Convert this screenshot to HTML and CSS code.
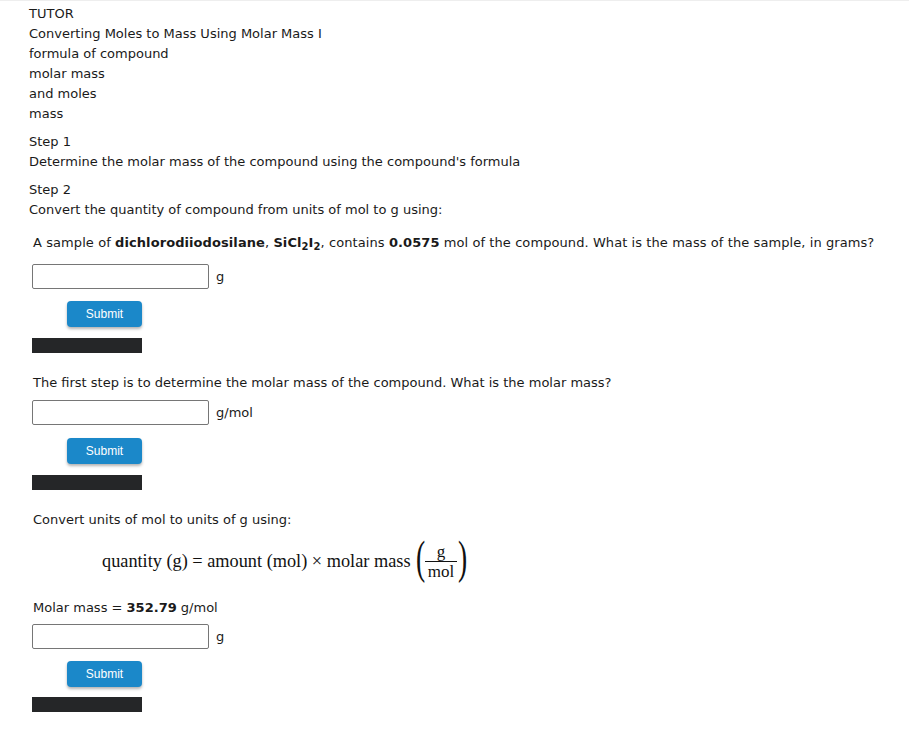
FILE: index.html
```html
<!DOCTYPE html>
<html>
<head>
<meta charset="utf-8">
<link rel="stylesheet" href="styles.css">
</head>
<body>
<div class="page">
  <div class="intro">
    <div class="line">TUTOR</div>
    <div class="line">Converting Moles to Mass Using Molar Mass I</div>
    <div class="line">formula of compound</div>
    <div class="line">molar mass</div>
    <div class="line">and moles</div>
    <div class="line">mass</div>
  </div>
  <div class="step">
    <div class="line">Step 1</div>
    <div class="line">Determine the molar mass of the compound using the compound's formula</div>
  </div>
  <div class="step">
    <div class="line">Step 2</div>
    <div class="line">Convert the quantity of compound from units of mol to g using:</div>
  </div>

  <div class="work">
    <p class="question">A sample of <b>dichlorodiiodosilane</b>, <b>SiCl<sub>2</sub>I<sub>2</sub></b>, contains <b>0.0575</b> mol of the compound. What is the mass of the sample, in grams?</p>
    <div class="answer"><span class="field"></span><span class="unit">g</span></div>
    <div class="actions"><span class="btn">Submit</span></div>
    <div class="bar"></div>

    <p class="prompt">The first step is to determine the molar mass of the compound. What is the molar mass?</p>
    <div class="answer tight"><span class="field"></span><span class="unit">g/mol</span></div>
    <div class="actions wide"><span class="btn">Submit</span></div>
    <div class="bar"></div>

    <p class="prompt">Convert units of mol to units of g using:</p>
    <div class="formula">
      <span class="ftext">quantity (g) = amount (mol) × molar mass</span>
      <span class="paren left">(</span>
      <span class="frac"><span class="num">g</span><span class="den">mol</span></span>
      <span class="paren right">)</span>
    </div>
    <p class="given">Molar mass = <b>352.79</b> g/mol</p>
    <div class="answer last"><span class="field"></span><span class="unit">g</span></div>
    <div class="actions"><span class="btn">Submit</span></div>
    <div class="bar end"></div>
  </div>
</div>
</body>
</html>
```
FILE: styles.css
```css
html, body {
  margin: 0;
  padding: 0;
  background: #ffffff;
}
body {
  border-top: 1px solid #eeeeee;
  font-family: "DejaVu Sans", Verdana, sans-serif;
  font-size: 13px;
  color: #1a1a1a;
}
.page {
  padding: 3px 0 20px 29px;
}
.line {
  line-height: 20px;
  height: 20px;
  white-space: nowrap;
}
.step {
  margin-top: 8px;
}
.work {
  padding-left: 3px;
  margin-top: 13px;
}
.question, .prompt, .given {
  margin: 0;
  line-height: 20px;
  padding-left: 1px;
  white-space: nowrap;
}
.question {
  letter-spacing: 0.08px;
}
.question b, .given b {
  font-weight: bold;
}
sub {
  font-size: 10px;
  line-height: 0;
  vertical-align: -3px;
}
.prompt {
  margin-top: 20px;
}
.answer {
  display: flex;
  align-items: center;
  margin-top: 11px;
  height: 25px;
}
.answer.tight {
  margin-top: 7px;
}
.answer.last {
  margin-top: 6px;
}
.field {
  display: block;
  box-sizing: border-box;
  width: 177px;
  height: 25px;
  border: 1px solid #767676;
  border-radius: 2px;
  background: #fff;
}
.unit {
  margin-left: 7px;
  line-height: 20px;
}
.actions {
  margin-top: 12px;
  padding-left: 35px;
  height: 26px;
}
.actions.wide {
  margin-top: 13px;
}
.btn {
  display: inline-flex;
  align-items: center;
  justify-content: center;
  box-sizing: border-box;
  width: 75px;
  height: 26px;
  background: #1b88c9;
  border-radius: 4px;
  box-shadow: 0 2px 3px rgba(0, 0, 0, 0.3);
  color: #ffffff;
  font-family: "Liberation Sans", Arial, sans-serif;
  font-size: 12px;
}
.bar {
  margin-top: 11px;
  width: 110px;
  height: 15px;
  background: #252628;
}
.bar.end {
  margin-top: 10px;
}
.formula {
  display: flex;
  align-items: center;
  margin-top: 9px;
  padding-left: 70px;
  height: 46px;
  font-family: "Liberation Serif", "Times New Roman", serif;
  font-size: 18.3px;
  color: #111;
}
.ftext {
  white-space: nowrap;
  position: relative;
  top: -1px;
}
.paren {
  display: inline-block;
  font-size: 46px;
  line-height: 40px;
  transform: scaleX(0.6);
  position: relative;
  top: -4px;
}
.paren.left {
  margin: 0 -3px 0 2px;
}
.paren.right {
  margin: 0 0 0 -2px;
}
.frac {
  display: inline-flex;
  flex-direction: column;
  align-items: center;
  font-size: 17px;
  line-height: 16px;
}
.num {
  padding: 0 4px 1px;
}
.den {
  border-top: 1px solid #111;
  padding: 2px 3px 0;
}
.given {
  margin-top: 13px;
}
```
